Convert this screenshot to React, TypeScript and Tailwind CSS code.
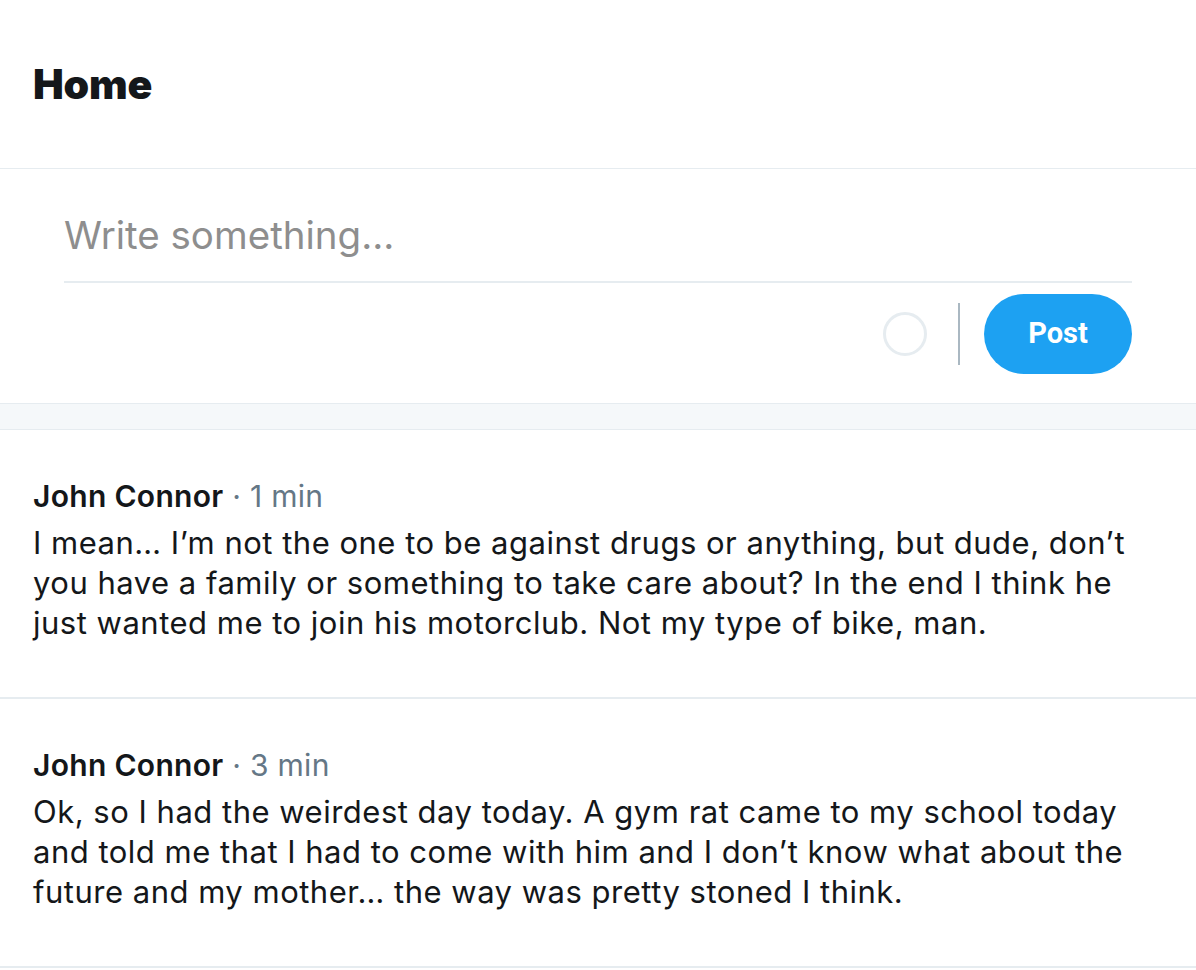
import { useState } from "react";

const posts = [
  {
    author: "John Connor",
    time: "1 min",
    body: "I mean… I’m not the one to be against drugs or anything, but dude, don’t you have a family or something to take care about? In the end I think he just wanted me to join his motorclub. Not my type of bike, man.",
  },
  {
    author: "John Connor",
    time: "3 min",
    body: "Ok, so I had the weirdest day today. A gym rat came to my school today and told me that I had to come with him and I don’t know what about the future and my mother… the way was pretty stoned I think.",
  },
];

export default function App() {
  const [text, setText] = useState("");

  return (
    <div className="min-h-screen bg-white font-['Inter',sans-serif] text-[#14171a]">
      {/* Header */}
      <header className="h-[169px] border-b border-[#e6ecf0] px-[33px] pt-[61px]">
        <h1 className="text-[41px] font-black leading-[46px] tracking-[-0.2px] text-[#14171a]">
          Home
        </h1>
      </header>

      {/* Composer */}
      <div className="border-b border-[#e6ecf0] px-[64px] pt-[42px] pb-[29px]">
        <div className="border-b-2 border-[#e6ecf0] pb-[22px]">
          <input
            value={text}
            onChange={(e) => setText(e.target.value)}
            placeholder="Write something..."
            className="block h-[48px] w-full bg-transparent text-[38.5px] leading-[48px] outline-none placeholder:text-[#8e8e8e]"
          />
        </div>
        <div className="mt-[11px] flex items-center justify-end">
          <div className="h-[44px] w-[44px] rounded-full border-[3px] border-[#e6ecf0]" />
          <div className="ml-[31px] mr-[24px] h-[62px] w-[2px] bg-[#aab8c2]" />
          <button className="h-[80px] w-[148px] rounded-full bg-[#1da1f2] font-['Roboto',sans-serif] text-[29px] font-bold text-white">
            Post
          </button>
        </div>
      </div>

      {/* Spacer band */}
      <div className="h-[26px] border-b border-[#e6ecf0] bg-[#f5f8fa]" />

      {/* Feed */}
      {posts.map((post, i) => (
        <article
          key={i}
          className="border-b-2 border-[#e6ecf0] px-[33px] pt-[46px] pb-[54px]"
        >
          <div className="text-[30px] leading-[40px] tracking-[0.3px]">
            <span className="font-semibold text-[#14171a]">{post.author}</span>
            <span className="text-[#657786]"> · {post.time}</span>
          </div>
          <p className="mt-[7px] max-w-[1150px] text-[31px] leading-[40px] tracking-[0.5px] text-[#14171a]">
            {post.body}
          </p>
        </article>
      ))}
    </div>
  );
}
